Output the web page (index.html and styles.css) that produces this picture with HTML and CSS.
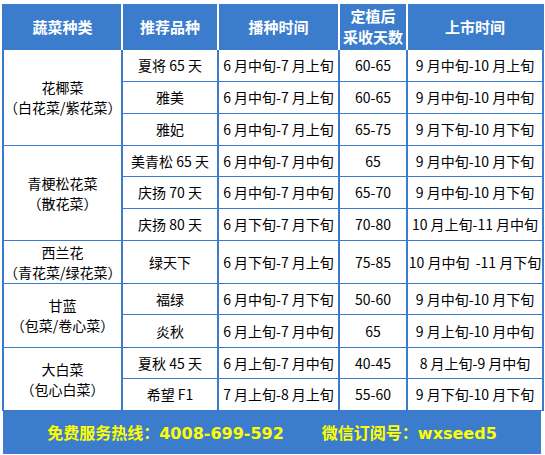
FILE: index.html
```html
<!DOCTYPE html>
<html lang="zh-CN">
<head>
<meta charset="utf-8">
<title>秋季蔬菜品种推荐</title>
<link rel="stylesheet" href="styles.css">
</head>
<body>
<div class="sheet">
  <table class="grid">
    <colgroup>
      <col class="c1"><col class="c2"><col class="c3"><col class="c4"><col class="c5">
    </colgroup>
    <thead>
      <tr>
        <th>蔬菜种类</th>
        <th>推荐品种</th>
        <th>播种时间</th>
        <th>定植后<br>采收天数</th>
        <th>上市时间</th>
      </tr>
    </thead>
    <tbody>
      <tr>
        <td rowspan="3" class="kind">花椰菜<br>（白花菜/紫花菜）</td>
        <td>夏将 65 天</td><td>6 月中旬-7 月上旬</td><td>60-65</td><td>9 月中旬-10 月上旬</td>
      </tr>
      <tr>
        <td>雅美</td><td>6 月中旬-7 月上旬</td><td>60-65</td><td>9 月中旬-10 月中旬</td>
      </tr>
      <tr>
        <td>雅妃</td><td>6 月中旬-7 月上旬</td><td>65-75</td><td>9 月下旬-10 月下旬</td>
      </tr>
      <tr class="h31">
        <td rowspan="3" class="kind">青梗松花菜<br>（散花菜）</td>
        <td>美青松 65 天</td><td>6 月中旬-7 月中旬</td><td>65</td><td>9 月中旬-10 月下旬</td>
      </tr>
      <tr>
        <td>庆扬 70 天</td><td>6 月中旬-7 月中旬</td><td>65-70</td><td>9 月中旬-10 月下旬</td>
      </tr>
      <tr>
        <td>庆扬 80 天</td><td>6 月下旬-7 月下旬</td><td>70-80</td><td>10 月上旬-11 月中旬</td>
      </tr>
      <tr class="tall">
        <td class="kind">西兰花<br>（青花菜/绿花菜）</td>
        <td>绿天下</td><td>6 月下旬-7 月上旬</td><td>75-85</td><td>10 月中旬 &nbsp;-11 月下旬</td>
      </tr>
      <tr class="h31">
        <td rowspan="2" class="kind">甘蓝<br>（包菜/卷心菜）</td>
        <td>福绿</td><td>6 月中旬-7 月下旬</td><td>50-60</td><td>9 月中旬-10 月下旬</td>
      </tr>
      <tr class="h33">
        <td>炎秋</td><td>6 月上旬-7 月中旬</td><td>65</td><td>9 月上旬-10 月中旬</td>
      </tr>
      <tr class="h31">
        <td rowspan="2" class="kind">大白菜<br>（包心白菜）</td>
        <td>夏秋 45 天</td><td>6 月上旬-7 月中旬</td><td>40-45</td><td>8 月上旬-9 月中旬</td>
      </tr>
      <tr>
        <td>希望 F1</td><td>7 月上旬-8 月上旬</td><td>55-60</td><td>9 月下旬-10 月下旬</td>
      </tr>
    </tbody>
  </table>
  <div class="footer">
    <span class="item">免费服务热线：<span class="num">4008-699-592</span></span>
    <span class="item">微信订阅号：<span class="num">wxseed5</span></span>
  </div>
</div>
</body>
</html>
```
FILE: styles.css
```css
* {
  box-sizing: border-box;
}

body {
  margin: 0;
  background: #ffffff;
  font-family: "Noto Sans CJK SC", sans-serif;
}

.sheet {
  width: 545px;
  padding: 4px 0 0 2px;
}

.grid {
  border-collapse: collapse;
  table-layout: fixed;
  width: 540px;
  font-size: 14px;
  color: #000000;
}

.c1 { width: 119px; }
.c2 { width: 96px; }
.c3 { width: 121px; }
.c4 { width: 68px; }
.c5 { width: 136px; }

.grid th {
  height: 45px;
  padding: 0;
  background: #3b7dcc;
  color: #ffffff;
  font-size: 15px;
  font-weight: bold;
  line-height: 21px;
  text-align: center;
  border-top: 0;
  border-bottom: 1px solid #3b7dcc;
  border-left: 2px solid #ffffff;
  border-right: 2px solid #ffffff;
}

.grid th:first-child {
  border-left-color: #3b7dcc;
}

.grid th:last-child {
  border-right-color: #3b7dcc;
}

.grid td {
  height: 32px;
  padding: 0;
  text-align: center;
  white-space: nowrap;
  line-height: 20px;
  border-top: 1px solid #3b7dcc;
  border-bottom: 1px solid #3b7dcc;
  border-left: 2px solid #3b7dcc;
  border-right: 2px solid #3b7dcc;
}

.grid tr.h31 td { height: 31px; }
.grid tr.h33 td { height: 33px; }
.grid tr.tall td { height: 43px; }

.grid td.kind {
  height: auto;
}

.footer {
  width: 538px;
  height: 43px;
  margin-left: 1px;
  background: #3b7dcc;
  color: #ffff00;
  display: flex;
  align-items: center;
  justify-content: center;
  gap: 38px;
  font-size: 16px;
  font-weight: bold;
}

.footer .num {
  font-family: "DejaVu Sans", sans-serif;
}
```
